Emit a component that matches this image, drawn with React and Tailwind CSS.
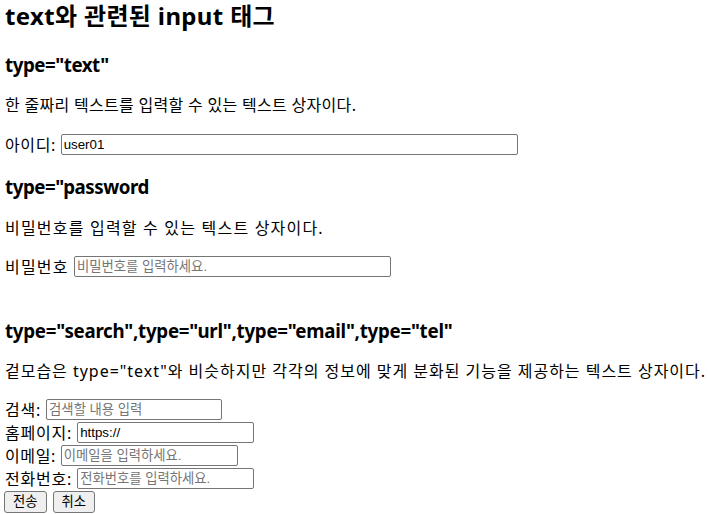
import React from 'react';

const ko = { fontFamily: '"Noto Sans", "Noto Sans CJK KR", sans-serif' };

const Field = ({ label, width, value, placeholder, track = 'tracking-[0.8px]' }) => (
  <div className="flex h-[23px] items-center whitespace-pre">
    <span className={track}>{label} </span>
    <input
      type="text"
      defaultValue={value}
      placeholder={placeholder}
      className="h-[21px] border border-[#767676] rounded-[2px] px-[2px] text-[13.33px] text-black placeholder:text-[#757575] bg-white outline-none"
      style={{ width, fontFamily: '"Liberation Sans", "Noto Sans CJK KR", sans-serif' }}
    />
  </div>
);

const Btn = ({ children }) => (
  <button className="h-[22px] px-[8px] border border-[#767676] rounded-[3px] bg-[#efefef] text-[13.33px] leading-none text-black">
    {children}
  </button>
);

export default function App() {
  return (
    <div className="bg-white text-black px-[5px] text-[16px] w-[709px] h-[514px] overflow-hidden" style={ko}>
      <h1 className="h-[32px] flex items-center text-[24px] font-bold tracking-[0.35px]">text와 관련된 input 태그</h1>

      <h3 className="mt-[20px] h-[26px] flex items-center text-[18.72px] font-bold tracking-[-0.45px]">type="text"</h3>
      <p className="mt-[16px] h-[22px] flex items-center tracking-[0.3px]">한 줄짜리 텍스트를 입력할 수 있는 텍스트 상자이다.</p>
      <div className="mt-[17px]">
        <Field label="아이디:" width="457px" value="user01" track="tracking-[0.6px]" />
      </div>

      <h3 className="mt-[18px] h-[26px] flex items-center text-[18.72px] font-bold tracking-[-0.45px]">type="password</h3>
      <p className="mt-[17px] h-[22px] flex items-center tracking-[1.2px]">비밀번호를 입력할 수 있는 텍스트 상자이다.</p>
      <div className="mt-[16px]">
        <Field label="비밀번호" width="317px" placeholder="비밀번호를 입력하세요." track="tracking-[1.2px]" />
      </div>

      <h3 className="mt-[40px] h-[26px] flex items-center text-[18.72px] font-bold tracking-[-0.25px]">
        type="search",type="url",type="email",type="tel"
      </h3>
      <p className="mt-[16px] h-[22px] flex items-center tracking-[0.98px] whitespace-nowrap">
        겉모습은 type="text"와 비슷하지만 각각의 정보에 맞게 분화된 기능을 제공하는 텍스트 상자이다.
      </p>
      <div className="mt-[16px] flex flex-col">
        <Field label="검색:" width="176px" placeholder="검색할 내용 입력" />
        <Field label="홈페이지:" width="177px" value="https://" />
        <Field label="이메일:" width="177px" placeholder="이메일을 입력하세요." track="tracking-[0.6px]" />
        <Field label="전화번호:" width="177px" placeholder="전화번호를 입력하세요." />
        <div className="flex h-[23px] items-center gap-[6px] -ml-[1px]">
          <Btn>전송</Btn>
          <Btn>취소</Btn>
        </div>
      </div>
    </div>
  );
}
